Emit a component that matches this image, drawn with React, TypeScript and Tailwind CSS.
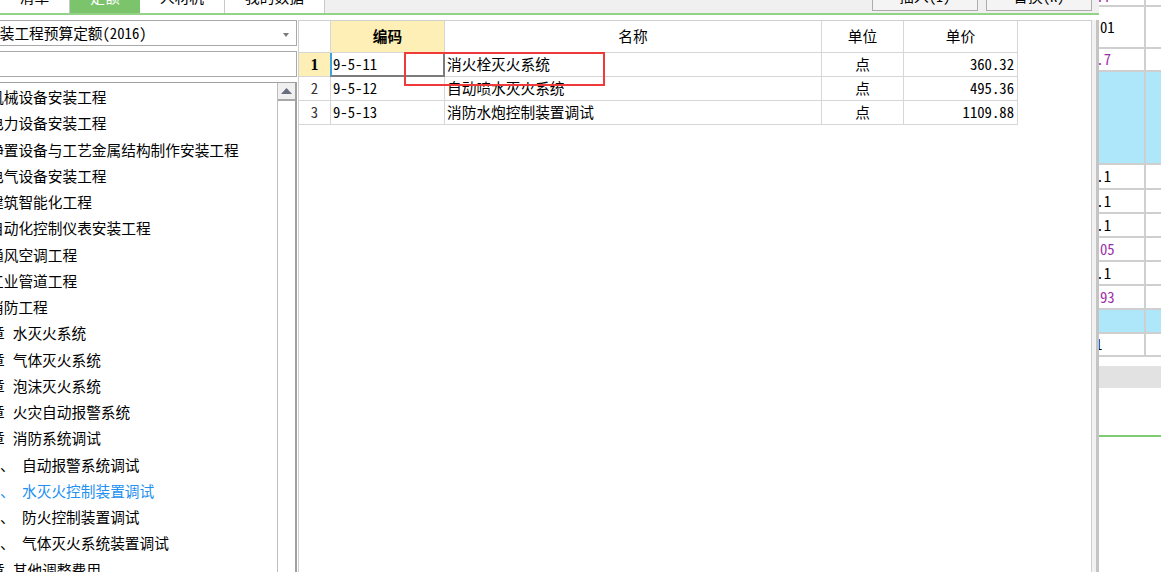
import React from "react";

const F = "font-['Noto_Sans_Mono_CJK_SC','Noto_Sans_CJK_SC',sans-serif]";

function Tab({ label, cls }: { label: string; cls: string }) {
  return (
    <div className={`h-[13px] flex justify-center overflow-hidden shrink-0 ${cls}`}>
      <div className="leading-[20px] -mt-[13px] whitespace-nowrap">{label}</div>
    </div>
  );
}

function Btn({ label }: { label: string }) {
  return (
    <div className="w-[106px] h-[11px] shrink-0 border-x border-b border-[#adadad] bg-[#f4f4f4] flex justify-center overflow-hidden">
      <div className="leading-[20px] -mt-[14px] whitespace-nowrap">{label}</div>
    </div>
  );
}

type TreeRow =
  | { kind: "book"; text: string }
  | { kind: "chap"; text: string }
  | { kind: "sub"; text: string; blue?: boolean };

const tree: TreeRow[] = [
  { kind: "book", text: "机械设备安装工程" },
  { kind: "book", text: "电力设备安装工程" },
  { kind: "book", text: "静置设备与工艺金属结构制作安装工程" },
  { kind: "book", text: "电气设备安装工程" },
  { kind: "book", text: "建筑智能化工程" },
  { kind: "book", text: "自动化控制仪表安装工程" },
  { kind: "book", text: "通风空调工程" },
  { kind: "book", text: "工业管道工程" },
  { kind: "book", text: "消防工程" },
  { kind: "chap", text: "水灭火系统" },
  { kind: "chap", text: "气体灭火系统" },
  { kind: "chap", text: "泡沫灭火系统" },
  { kind: "chap", text: "火灾自动报警系统" },
  { kind: "chap", text: "消防系统调试" },
  { kind: "sub", text: "自动报警系统调试" },
  { kind: "sub", text: "水灭火控制装置调试", blue: true },
  { kind: "sub", text: "防火控制装置调试" },
  { kind: "sub", text: "气体灭火系统装置调试" },
  { kind: "chap", text: "其他调整费用" },
];

function Tree() {
  return (
    <div className="flex-1 min-w-0 overflow-hidden pt-[1px]">
      {tree.map((r, i) => (
        <div key={i} className="h-[26.25px] flex items-center whitespace-nowrap">
          {r.kind === "book" && <span className="ml-[-11px]">{r.text}</span>}
          {r.kind === "chap" && (
            <>
              <span className="ml-[-10px]">章</span>
              <span className="ml-[8px]">{r.text}</span>
            </>
          )}
          {r.kind === "sub" && (
            <span className={r.blue ? "text-[#2290f0] flex" : "flex"}>
              <span className="w-[15px] inline-block">、</span>
              <span className="ml-[7px]">{r.text}</span>
            </span>
          )}
        </div>
      ))}
    </div>
  );
}

const rows = [
  { n: "1", code: "9-5-11", name: "消火栓灭火系统", unit: "点", price: "360.32" },
  { n: "2", code: "9-5-12", name: "自动喷水灭火系统", unit: "点", price: "495.36" },
  { n: "3", code: "9-5-13", name: "消防水炮控制装置调试", unit: "点", price: "1109.88" },
];

function Table() {
  return (
    <div className="flex flex-col">
      <div className="flex h-[32px]">
        <div className="w-[32px] shrink-0 border-r border-b border-[#d6d6d6] bg-white" />
        <div className="w-[114px] shrink-0 border-r border-b border-[#d6d6d6] bg-[#fdefb6] flex items-center justify-center font-bold">编码</div>
        <div className="w-[377px] shrink-0 border-r border-b border-[#d6d6d6] flex items-center justify-center">名称</div>
        <div className="w-[82px] shrink-0 border-r border-b border-[#d6d6d6] flex items-center justify-center">单位</div>
        <div className="w-[114px] shrink-0 border-r border-b border-[#d6d6d6] flex items-center justify-center">单价</div>
      </div>
      {rows.map((r, i) => (
        <div key={i} className="flex h-[24px]">
          <div
            className={
              i === 0
                ? "w-[32px] shrink-0 border-r border-b border-[#d6d6d6] bg-[#fdefb6] flex items-center justify-center font-bold font-['Liberation_Serif',serif] text-[16px]"
                : "w-[32px] shrink-0 border-r border-b border-[#d6d6d6] flex items-center justify-center text-[#333]"
            }
          >
            {r.n}
          </div>
          <div className="w-[114px] shrink-0 border-r border-b border-[#d6d6d6] flex items-center pl-[2px] relative">
            {i === 0 && (
              <div className="absolute left-[-1px] top-0 right-[-1px] bottom-[-1px] border-l-2 border-l-[#3ba3e3] border-r-2 border-r-[#7c7c7c] border-b-2 border-b-[#7c7c7c]" />
            )}
            {r.code}
          </div>
          <div className="w-[377px] shrink-0 border-r border-b border-[#d6d6d6] flex items-center pl-[2px] whitespace-nowrap">{r.name}</div>
          <div className="w-[82px] shrink-0 border-r border-b border-[#d6d6d6] flex items-center justify-center">{r.unit}</div>
          <div className="w-[114px] shrink-0 border-r border-b border-[#d6d6d6] flex items-center justify-end pr-[3px]">{r.price}</div>
        </div>
      ))}
    </div>
  );
}

function GRow({ h, cyan, children, second }: { h: string; cyan?: boolean; children?: React.ReactNode; second?: React.ReactNode }) {
  return (
    <div className={`flex shrink-0 border-b-2 border-[#cfcfcf] ${h} ${cyan ? "bg-[#ade7f9]" : ""}`}>
      <div className="w-[47px] shrink-0 border-r-2 border-[#cfcfcf] overflow-hidden flex items-center whitespace-nowrap">{children}</div>
      <div className="flex-1">{second}</div>
    </div>
  );
}

function RightGrid() {
  const purple = "text-[#9c30a8]";
  return (
    <div className="flex-1 flex flex-col overflow-hidden">
      <div className="flex shrink-0 h-[7px] border-b-2 border-[#cfcfcf]">
        <div className="w-[47px] shrink-0 border-r-2 border-[#cfcfcf] overflow-hidden">
          <div className={`leading-[20px] -mt-[14px] ml-[-10px] whitespace-nowrap ${purple}`}>0.7</div>
        </div>
      </div>
      <GRow h="h-[42px]"><span className="pl-[1px]">01</span></GRow>
      <GRow h="h-[23px]"><span className={`ml-[-10px] ${purple}`}>0.7</span></GRow>
      <GRow h="h-[93px]" cyan />
      <GRow h="h-[25px]"><span className="ml-[-10px]">0.1</span></GRow>
      <GRow h="h-[24px]"><span className="ml-[-10px]">0.1</span></GRow>
      <GRow h="h-[24px]"><span className="ml-[-10px]">0.1</span></GRow>
      <GRow h="h-[24px]"><span className={`pl-[1px] ${purple}`}>05</span></GRow>
      <GRow h="h-[24px]"><span className="ml-[-10px]">0.1</span></GRow>
      <GRow h="h-[24px]"><span className={`pl-[1px] ${purple}`}>93</span></GRow>
      <GRow h="h-[24px]" cyan />
      <GRow h="h-[23px]"><span className="ml-[-4px]">1</span></GRow>
      <div className="h-[9px] shrink-0" />
      <div className="h-[22px] shrink-0 bg-[#e2e2e2]" />
      <div className="h-[47px] shrink-0" />
      <div className="h-[2px] shrink-0 bg-[#7fcb72]" />
    </div>
  );
}

export default function App() {
  return (
    <div className={`relative w-[1161px] h-[572px] overflow-hidden bg-white flex text-[14.7px] text-black ${F}`}>
      <div className="w-[1099px] shrink-0 flex flex-col">
        <div className="h-[13px] flex bg-[#f0f0f0] overflow-hidden shrink-0">
          <Tab label="清单" cls="w-[70px] bg-white border-r border-[#c9c9c9]" />
          <Tab label="定额" cls="w-[70px] bg-[#7cc46c] text-white" />
          <Tab label="人材机" cls="w-[85px] bg-white border-r border-[#c9c9c9]" />
          <Tab label="我的数据" cls="w-[100px] bg-white border-r border-[#c9c9c9]" />
          <div className="ml-[547px] flex gap-[8px]">
            <Btn label="插入(I)" />
            <Btn label="替换(R)" />
          </div>
        </div>
        <div className="h-[2px] bg-[#93d386] shrink-0" />
        <div className="flex-1 flex pt-[5px] min-h-0">
          {/* left panel */}
          <div className="w-[298px] -ml-px shrink-0 flex flex-col">
            <div className="h-[26px] shrink-0 border border-[#a9a9a9] bg-white flex items-center relative overflow-hidden">
              <span className="ml-[-15px] whitespace-nowrap">安装工程预算定额(2016)</span>
              <svg className="absolute left-[283px] top-[12px]" width="6" height="4" viewBox="0 0 6 4">
                <path d="M0 0 L6 0 L3 4 Z" fill="#7a7a7a" />
              </svg>
            </div>
            <div className="h-[26px] shrink-0 mt-[5px] border border-[#a9a9a9] bg-white" />
            <div className="flex-1 mt-[5px] border-l border-t border-r border-[#a0a0a0] bg-white flex min-h-0">
              <Tree />
              <div className="w-[19px] shrink-0 border-l border-r border-l-[#bdbdbd] border-r-[#a0a0a0] flex flex-col">
                <div className="h-[18px] shrink-0 border-b-2 border-[#a8a8a8] bg-[#f0f0f0] flex items-center justify-center">
                  <svg width="11" height="6" viewBox="0 0 11 6">
                    <path d="M0 6 L5.5 0 L11 6 Z" fill="#686e80" />
                  </svg>
                </div>
              </div>
            </div>
          </div>
          {/* middle panel */}
          <div className="w-[794px] ml-[1px] shrink-0 border-l border-t border-r border-[#cfcfcf] bg-white">
            <Table />
          </div>
          {/* splitter */}
          <div className="w-[7px] shrink-0 bg-[#f2f2f2] border-r-[3px] border-[#c4c4c4]" />
        </div>
      </div>
      <RightGrid />
      {/* red highlight rectangle */}
      <div className="absolute left-[404px] top-[52px] w-[201px] h-[34px] border-2 border-[#f03a3a]" />
    </div>
  );
}
